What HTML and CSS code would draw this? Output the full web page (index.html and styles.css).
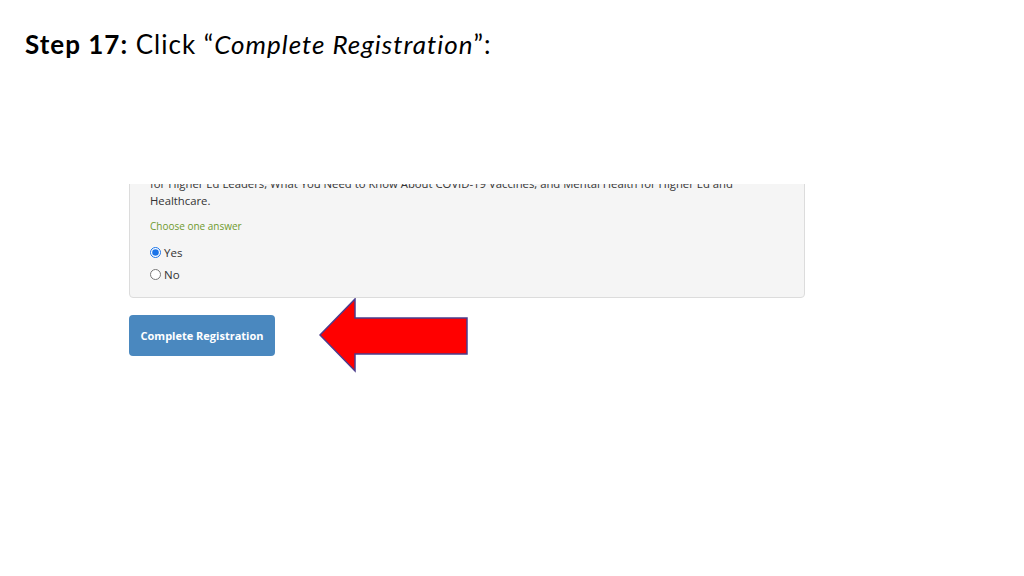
FILE: index.html
```html
<!DOCTYPE html>
<html lang="en">
<head>
    <meta charset="UTF-8">
    <title>Step 17</title>
    <link rel="stylesheet" href="styles.css">
</head>
<body>
    <h1 class="step-title"><b>Step 17:</b> Click “<i>Complete Registration</i>”:</h1>

    <!-- cropped screenshot of the form -->
    <div class="shot">
        <div class="question-panel">
            <p class="question-text">for Higher Ed Leaders, What You Need to Know About COVID-19 Vaccines, and Mental Health for Higher Ed and Healthcare.</p>
            <p class="hint">Choose one answer</p>
            <label class="choice"><input type="radio" name="answer" checked> Yes</label>
            <label class="choice"><input type="radio" name="answer"> No</label>
        </div>
    </div>

    <div class="action-row">
        <button class="complete-btn">Complete Registration</button>
        <svg class="arrow" width="150" height="75" viewBox="0 0 150 75">
            <polygon points="1,37 36,1 36,20 148,20 148,56 36,56 36,73" fill="#ff0000" stroke="#4b3c8c" stroke-width="1.5"/>
        </svg>
    </div>
</body>
</html>
```

FILE: styles.css
```css
* {
    box-sizing: border-box;
    margin: 0;
    padding: 0;
}

body {
    background-color: #fff;
    font-family: "Open Sans", "Liberation Sans", sans-serif;
    width: 1024px;
    height: 576px;
    overflow: hidden;
}

.step-title {
    font-family: Lato, "Liberation Sans", sans-serif;
    font-size: 26px;
    font-weight: normal;
    color: #000;
    padding: 28px 0 0 25px;
    line-height: 32px;
    letter-spacing: 1px;
}

.step-title b {
    font-weight: bold;
}

.shot {
    margin: 124px 0 0 129px;
    width: 676px;
    height: 114px;
    overflow: hidden;
}

.question-panel {
    margin-top: -12px;
    height: 126px;
    background-color: #f5f5f5;
    border: 1px solid #dcdcdc;
    border-radius: 4px;
    padding: 2px 20px 0 20px;
    color: #333;
    font-size: 11.3px;
}

.question-text {
    line-height: 17px;
    width: 600px;
}

.hint {
    color: #6f9a2e;
    font-size: 10px;
    margin: 10px 0 8px;
}

.choice {
    display: flex;
    align-items: center;
    gap: 3px;
    height: 22px;
    font-size: 11.5px;
}

.choice input {
    width: 11px;
    height: 11px;
    margin: 0;
    accent-color: #1a73e8;
}

.action-row {
    display: flex;
    align-items: center;
    gap: 44px;
    margin: 0 0 0 129px;
}

.complete-btn {
    width: 146px;
    height: 41px;
    background-color: #4a88bf;
    border: none;
    border-radius: 4px;
    color: #fff;
    font-family: "Open Sans", sans-serif;
    font-weight: bold;
    font-size: 11px;
}

.arrow {
    display: block;
}
```
